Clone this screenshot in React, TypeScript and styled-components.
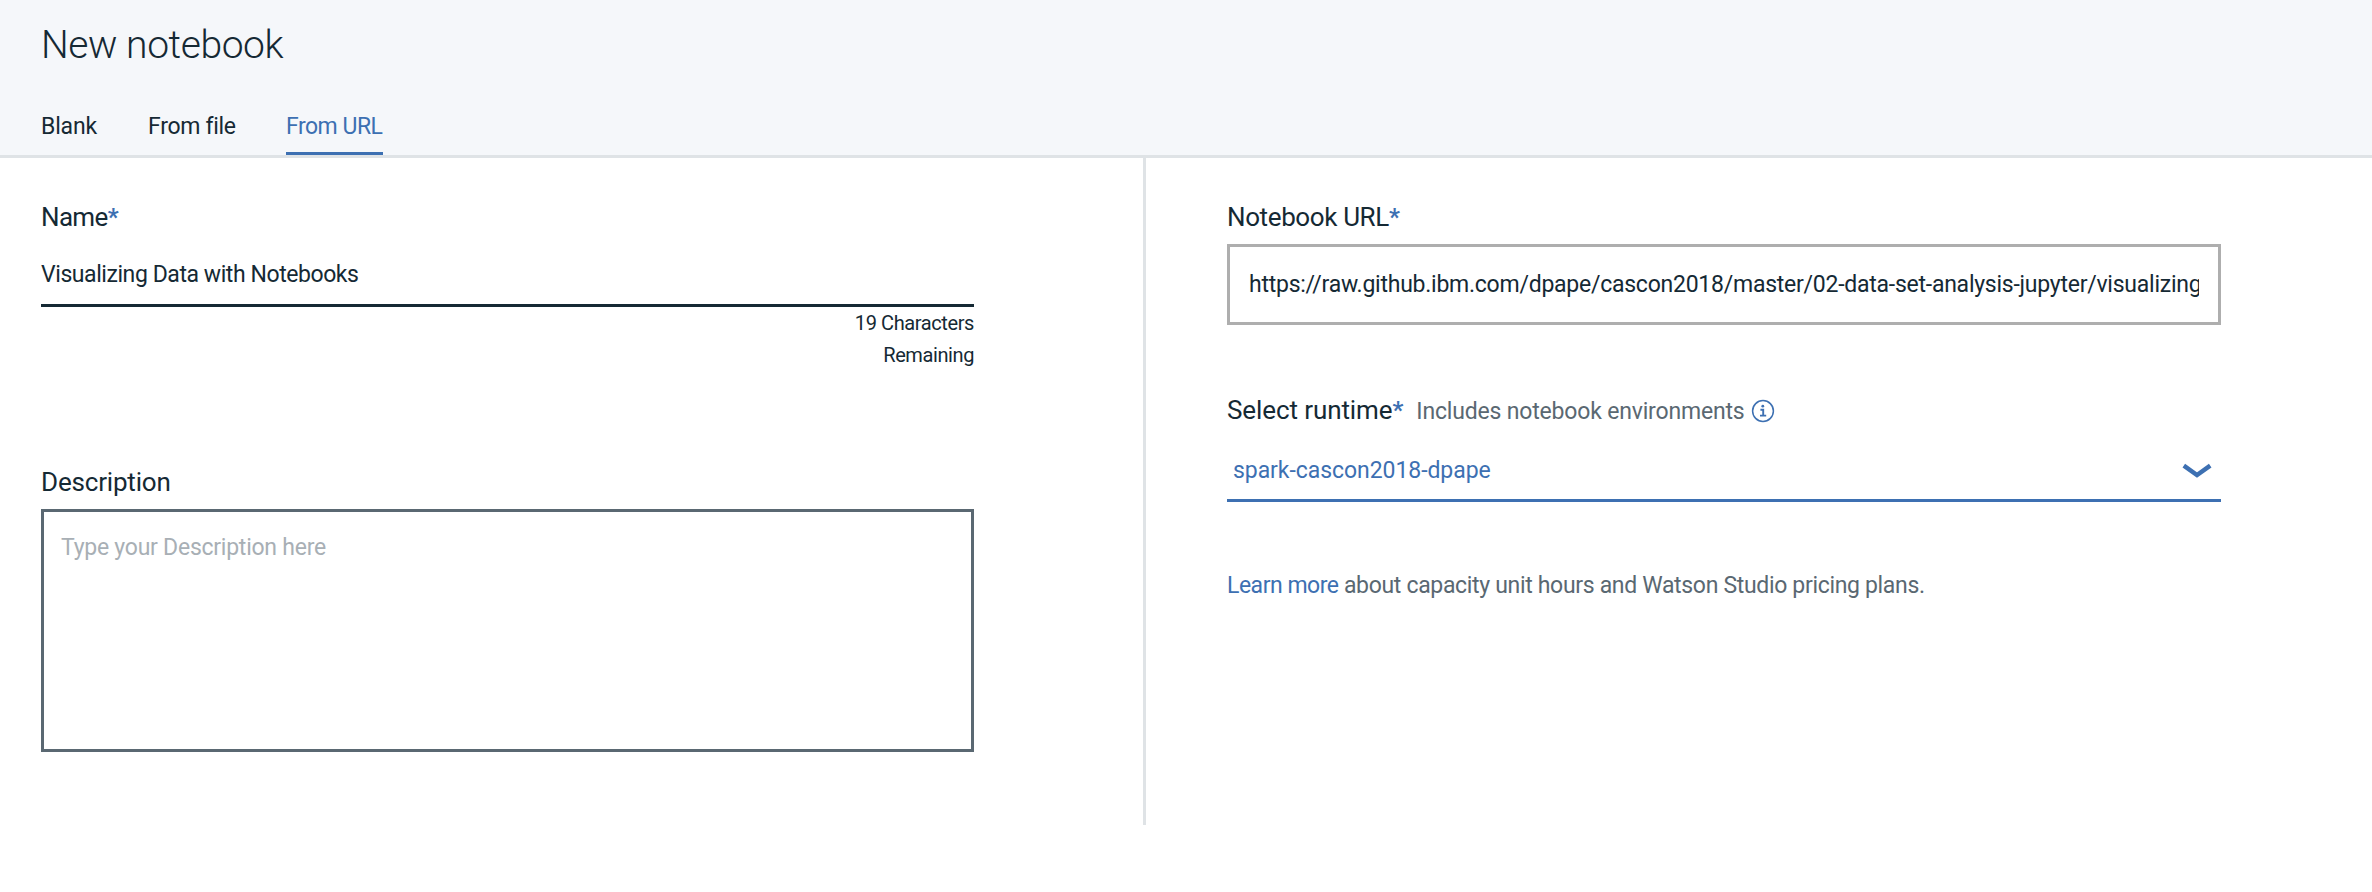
import React from 'react';
import styled, { createGlobalStyle } from 'styled-components';

const ink = '#152934';
const blue = '#3d70b2';
const slate = '#5a6872';
const rule = '#dfe3e6';

const GlobalStyle = createGlobalStyle`
  body { margin: 0; background: #fff; }
  *, *::before, *::after { box-sizing: border-box; }
  body, input, textarea, button { font-family: Roboto, "Liberation Sans", sans-serif; color: ${ink}; }
`;

const Page = styled.main`
  min-height: 892px;
`;

const Header = styled.header`
  height: 158px;
  padding: 20px 0 0 41px;
  background: #f5f7fa;
  border-bottom: 3px solid ${rule};
`;

const Title = styled.h1`
  margin: 0 0 41px;
  font-size: 39px;
  font-weight: 300;
  line-height: 50px;
  letter-spacing: -0.42px;
`;

const Tabs = styled.nav`
  display: flex;
  gap: 50px;
`;

const Tab = styled.button<{ $width: number; $tracking: number; $active?: boolean }>`
  width: ${(p) => p.$width}px;
  height: 44px;
  padding: 0 0 9px;
  border: 0;
  border-bottom: 3px solid ${(p) => (p.$active ? blue : 'transparent')};
  background: none;
  color: ${(p) => (p.$active ? blue : ink)};
  font-size: 23px;
  line-height: 32px;
  letter-spacing: ${(p) => p.$tracking}px;
  text-align: left;
  white-space: nowrap;
`;

const Columns = styled.div`
  display: flex;
  height: 667px;
`;

const DetailsPane = styled.section`
  width: 1146px;
  padding: 41px 169px 0 41px;
  border-right: 3px solid ${rule};
`;

const SourcePane = styled.section`
  width: 1075px;
  padding: 41px 0 0 81px;
`;

const Label = styled.label<{ $tracking: number }>`
  display: block;
  font-size: 26px;
  line-height: 36px;
  letter-spacing: ${(p) => p.$tracking}px;
  white-space: nowrap;
`;

const Required = styled.span`
  color: ${blue};
  font-weight: 700;
  font-size: 24px;
  line-height: 0;
  letter-spacing: 0;
  vertical-align: 1px;
`;

const NameInput = styled.input`
  display: block;
  width: 100%;
  height: 63px;
  margin: 9px 0 0;
  padding: 0;
  border: 0;
  border-bottom: 3px solid ${ink};
  outline: 0;
  font-size: 23px;
  letter-spacing: -0.43px;
`;

const Counter = styled.p`
  width: 140px;
  margin: 0 0 93px auto;
  font-size: 20px;
  line-height: 32px;
  letter-spacing: -0.4px;
  text-align: right;
`;

const DescriptionInput = styled.textarea`
  display: block;
  width: 100%;
  height: 243px;
  margin: 9px 0 0;
  padding: 20px 17px;
  border: 3px solid ${slate};
  border-radius: 0;
  outline: 0;
  resize: none;
  font-size: 23px;
  line-height: 32px;
  letter-spacing: -0.25px;
  &::placeholder { color: #a8afb5; opacity: 1; }
`;

const UrlInput = styled.input`
  display: block;
  width: 100%;
  height: 81px;
  margin: 9px 0 67px;
  padding: 0 19px;
  border: 3px solid #aeaeae;
  border-radius: 0;
  outline: 0;
  font-size: 23px;
  letter-spacing: -0.245px;
`;

const RuntimeHeading = styled.div`
  display: flex;
  align-items: baseline;
  height: 36px;
`;

const Hint = styled.span`
  margin-left: 13px;
  color: ${slate};
  font-size: 23px;
  line-height: 36px;
  letter-spacing: -0.18px;
  white-space: nowrap;
`;

const InfoIcon = styled.svg`
  align-self: flex-start;
  width: 24px;
  height: 24px;
  margin: 7px 0 0 7px;
`;

const RuntimeSelect = styled.button`
  display: flex;
  align-items: center;
  justify-content: space-between;
  width: 100%;
  height: 61px;
  margin: 13px 0 68px;
  padding: 2px 9px 0 6px;
  border: 0;
  border-bottom: 3px solid ${blue};
  background: none;
  color: ${blue};
  font-size: 23px;
  line-height: 32px;
  letter-spacing: -0.06px;
`;

const Chevron = styled.svg`
  width: 30px;
  height: 16px;
`;

const Pricing = styled.p`
  margin: 0;
  color: ${slate};
  font-size: 23px;
  line-height: 32px;
  letter-spacing: -0.327px;
`;

const Link = styled.a`
  color: ${blue};
  letter-spacing: -0.48px;
`;

export default function App() {
  return (
    <Page>
      <GlobalStyle />
      <Header>
        <Title>New notebook</Title>
        <Tabs>
          <Tab $width={57} $tracking={-0.18}>Blank</Tab>
          <Tab $width={88} $tracking={-0.29}>From file</Tab>
          <Tab $width={97} $tracking={-0.5} $active>From URL</Tab>
        </Tabs>
      </Header>
      <Columns>
        <DetailsPane>
          <Label $tracking={-0.66} htmlFor="name">Name<Required>*</Required></Label>
          <NameInput id="name" defaultValue="Visualizing Data with Notebooks" />
          <Counter>19 Characters Remaining</Counter>
          <Label $tracking={-0.18} htmlFor="description">Description</Label>
          <DescriptionInput id="description" placeholder="Type your Description here" />
        </DetailsPane>
        <SourcePane>
          <Label $tracking={-0.38} htmlFor="url">Notebook URL<Required>*</Required></Label>
          <UrlInput
            id="url"
            defaultValue="https://raw.github.ibm.com/dpape/cascon2018/master/02-data-set-analysis-jupyter/visualizing"
          />
          <RuntimeHeading>
            <Label as="span" $tracking={-0.1}>Select runtime<Required>*</Required></Label>
            <Hint>Includes notebook environments</Hint>
            <InfoIcon viewBox="0 0 24 24" fill="none">
              <circle cx="12" cy="12" r="10.4" stroke={blue} strokeWidth="1.5" />
              <circle cx="11.8" cy="7.2" r="1.4" fill={blue} />
              <path d="M9.4 10.7H12.2V16.6M9 16.6H15.2" stroke={blue} strokeWidth="1.9" />
            </InfoIcon>
          </RuntimeHeading>
          <RuntimeSelect>
            spark-cascon2018-dpape
            <Chevron viewBox="0 0 30 16" fill="none">
              <path d="M1.8 2.6L15 12L28.2 2.6" stroke={blue} strokeWidth="4.4" />
            </Chevron>
          </RuntimeSelect>
          <Pricing>
            <Link>Learn more</Link> about capacity unit hours and Watson Studio pricing plans.
          </Pricing>
        </SourcePane>
      </Columns>
    </Page>
  );
}
